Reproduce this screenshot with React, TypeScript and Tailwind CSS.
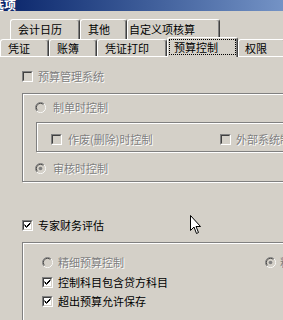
import React from "react";

const dim = "text-[#808080] [text-shadow:1px_1px_0_#fff]";

function Check({ checked, disabled }: { checked?: boolean; disabled?: boolean }) {
  return (
    <span
      className={`relative inline-block w-[11px] h-[11px] shrink-0 border border-t-[#808080] border-l-[#808080] border-r-white border-b-white ${
        disabled ? "bg-[#d4d0c8]" : "bg-white"
      }`}
    >
      <span className="absolute inset-0 border border-t-[#404040] border-l-[#404040] border-r-[#d4d0c8] border-b-[#d4d0c8]" />
      {checked && (
        <svg className="absolute left-0 top-0" width="9" height="9" viewBox="0 0 9 9">
          <path d="M1.5 3.5 L3.5 5.5 L7.5 1.5 M1.5 4.5 L3.5 6.5 L7.5 2.5" stroke="#000" strokeWidth="1" fill="none" />
        </svg>
      )}
    </span>
  );
}

function Radio({ checked, disabled }: { checked?: boolean; disabled?: boolean }) {
  const fill = disabled ? "#d4d0c8" : "#ffffff";
  return (
    <svg width="11" height="11" viewBox="0 0 12 12" className="shrink-0">
      <circle cx="6" cy="6" r="5" fill={fill} />
      <path d="M9.9 2.1 A5.5 5.5 0 0 0 2.1 9.9" stroke="#808080" fill="none" />
      <path d="M9.9 2.1 A5.5 5.5 0 0 1 2.1 9.9" stroke="#ffffff" fill="none" />
      <path d="M9.2 2.8 A4.5 4.5 0 0 0 2.8 9.2" stroke="#404040" fill="none" />
      <path d="M9.2 2.8 A4.5 4.5 0 0 1 2.8 9.2" stroke="#d4d0c8" fill="none" />
      {checked && <circle cx="6" cy="6" r="2" fill={disabled ? "#808080" : "#000"} />}
    </svg>
  );
}

function Tab({ label, w, pl = "pl-[7px]" }: { label: string; w: string; pl?: string }) {
  return (
    <div
      className={`${w} ${pl} h-full flex items-center shrink-0 border-t border-l border-r border-t-white border-l-white border-r-[#404040] shadow-[inset_-1px_0_0_#808080] rounded-t-[3px]`}
    >
      {label}
    </div>
  );
}

export default function App() {
  return (
    <div className="relative w-[283px] h-[320px] overflow-hidden bg-[#d4d0c8] text-[11px] leading-[11px] text-black font-['Noto_Sans_CJK_SC','SimSun',sans-serif]">
      {/* title bar */}
      <div className="h-[11px] w-[340px] bg-gradient-to-r from-[#0a246a] to-[#8caad8] flex items-center overflow-hidden">
        <span className="ml-[-8px] -mt-[2px] text-white font-bold text-[12px] leading-none">选项</span>
      </div>

      {/* back row tabs */}
      <div className="mt-[8px] pl-[10px] h-[20px] flex w-[400px]">
        <Tab label="会计日历" w="w-[70px]" />
        <Tab label="其他" w="w-[47px]" />
        <Tab label="自定义项核算" w="w-[93px]" pl="pl-[1px]" />
      </div>

      {/* front row tabs */}
      <div className="h-[17px] flex items-end w-[400px]">
        <Tab label="凭证" w="w-[49px]" />
        <Tab label="账簿" w="w-[48px]" />
        <Tab label="凭证打印" w="w-[70px]" />
        <div className="relative z-10 top-[1px] w-[71px] h-[20px] pl-[6px] flex items-center shrink-0 bg-[#d4d0c8] border-t border-l border-r border-t-white border-l-white border-r-[#404040] shadow-[inset_-1px_0_0_#808080] rounded-t-[3px]">
          <span className="absolute inset-x-[1px] top-[1px] bottom-[2px] border border-dotted border-black" />
          预算控制
        </div>
        <Tab label="权限" w="w-[48px]" pl="pl-[6px]" />
      </div>

      {/* panel */}
      <div className="border-t border-white pl-[22px] w-[400px] h-[300px]">
        <div className="mt-[14px] h-[11px] flex items-center gap-[5px]">
          <Check disabled />
          <span className={dim}>预算管理系统</span>
        </div>

        <div className="mt-[11px] h-[89px] w-[330px] border border-[#808080] shadow-[1px_1px_0_#fff,inset_1px_1px_0_#fff]">
          <div className="mt-[8px] pl-[12px] h-[11px] flex items-center gap-[7px]">
            <Radio disabled />
            <span className={dim}>制单时控制</span>
          </div>
          <div className="mt-[9px] ml-[13px] h-[30px] w-[330px] border border-[#808080] shadow-[1px_1px_0_#fff,inset_1px_1px_0_#fff] pt-[11px] pl-[14px] flex items-start">
            <div className="w-[169px] h-[11px] flex items-center gap-[6px]">
              <Check disabled />
              <span className={dim}>作废(删除)时控制</span>
            </div>
            <div className="h-[11px] flex items-center gap-[5px]">
              <Check disabled />
              <span className={`${dim} whitespace-nowrap`}>外部系统制单时控制</span>
            </div>
          </div>
          <div className="mt-[11px] pl-[12px] h-[11px] flex items-center gap-[7px]">
            <Radio checked disabled />
            <span className={dim}>审核时控制</span>
          </div>
        </div>

        <div className="mt-[38px] h-[11px] flex items-center gap-[5px]">
          <Check checked />
          <span>专家财务评估</span>
        </div>

        <div className="mt-[11px] h-[120px] w-[330px] border border-[#808080] shadow-[1px_1px_0_#fff,inset_1px_1px_0_#fff] pl-[19px]">
          <div className="mt-[14px] h-[11px] flex items-center">
            <div className="w-[223px] flex items-center gap-[5px]">
              <Radio disabled />
              <span className={dim}>精细预算控制</span>
            </div>
            <div className="flex items-center gap-[4px]">
              <Radio checked disabled />
              <span className={`${dim} whitespace-nowrap`}>粗放预算控制</span>
            </div>
          </div>
          <div className="mt-[9px] h-[11px] flex items-center gap-[5px]">
            <Check checked />
            <span>控制科目包含贷方科目</span>
          </div>
          <div className="mt-[8px] h-[11px] flex items-center gap-[5px]">
            <Check checked />
            <span>超出预算允许保存</span>
          </div>
        </div>
      </div>

      {/* mouse pointer */}
      <svg className="absolute left-[190px] top-[215px]" width="12" height="20" viewBox="0 0 12 20">
        <path d="M0.5 0.5 L0.5 15.5 L4 12 L6.5 18.5 L8.5 17.5 L6 11.5 L10.5 11.5 Z" fill="#fff" stroke="#000" strokeWidth="1" />
      </svg>
    </div>
  );
}
